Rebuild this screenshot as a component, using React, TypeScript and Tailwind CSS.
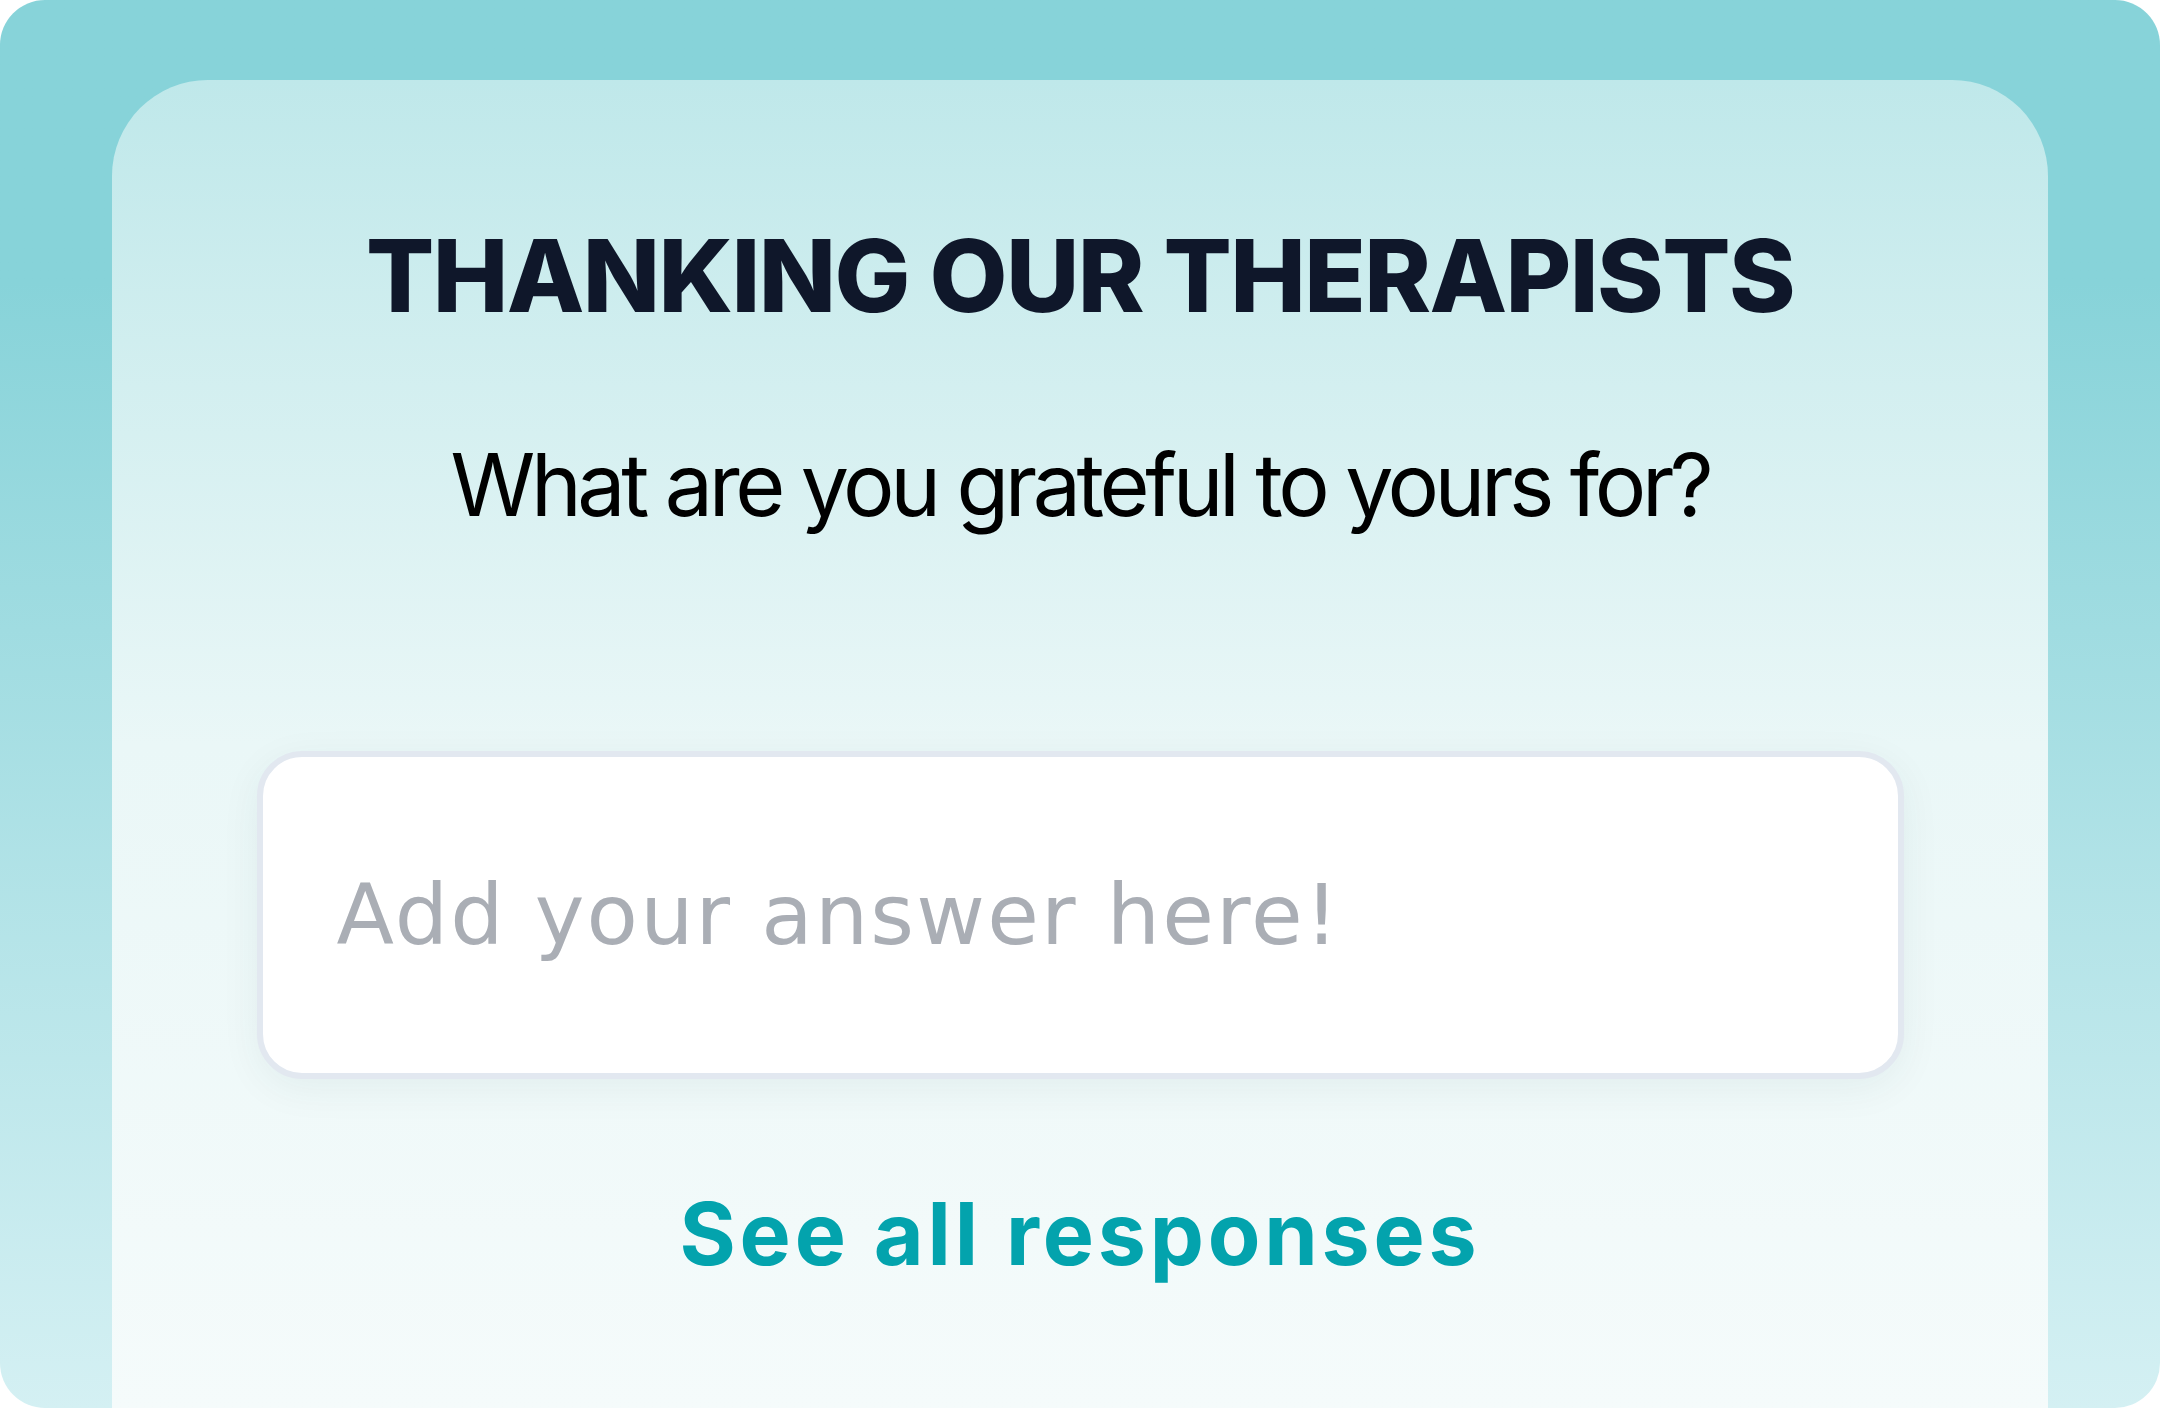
import React from "react";

export default function App() {
  const font = { fontFamily: "Inter, 'Noto Sans', sans-serif" } as React.CSSProperties;
  const wide = { fontFamily: "'DejaVu Sans', Inter, sans-serif" } as React.CSSProperties;
  return (
    <div className="w-[2160px] h-[1408px] bg-white" style={font}>
      <div className="w-[2160px] h-[1408px] rounded-[45px] overflow-hidden bg-gradient-to-b from-[#87d3d9] from-20% to-[#d4f0f3] px-[112px] pt-[80px] flex">
        <div className="flex-1 rounded-t-[96px] bg-gradient-to-b from-[#bfe8ea] via-[#eaf7f7] via-50% to-[#f5fbfb] flex flex-col items-center pt-[145px]">
          <h1 className="text-[101px] leading-none font-extrabold text-[#0f172a] tracking-[-1.6px]">
            THANKING OUR THERAPISTS
          </h1>
          <p className="mt-[116px] text-[86px] leading-none font-normal text-black tracking-[-4.4px]">
            What are you grateful to yours for?
          </p>
          <div className="mt-[223px] w-[1647px] h-[328px] rounded-[45px] border-[6px] border-[#e2e8f0] bg-white shadow-[0_10px_40px_rgba(15,60,70,0.06)] flex items-center pl-[74px] pr-[74px]">
            <input
              className="w-full bg-transparent outline-none text-[84px] leading-none font-normal tracking-[2.2px] text-[#374151] placeholder:text-[#aaaeb5]"
              placeholder="Add your answer here!"
              style={wide}
            />
          </div>
          <a className="mt-[112px] text-[86px] leading-none font-bold text-[#03a3ad] tracking-[3.8px]">See all responses</a>
        </div>
      </div>
    </div>
  );
}
